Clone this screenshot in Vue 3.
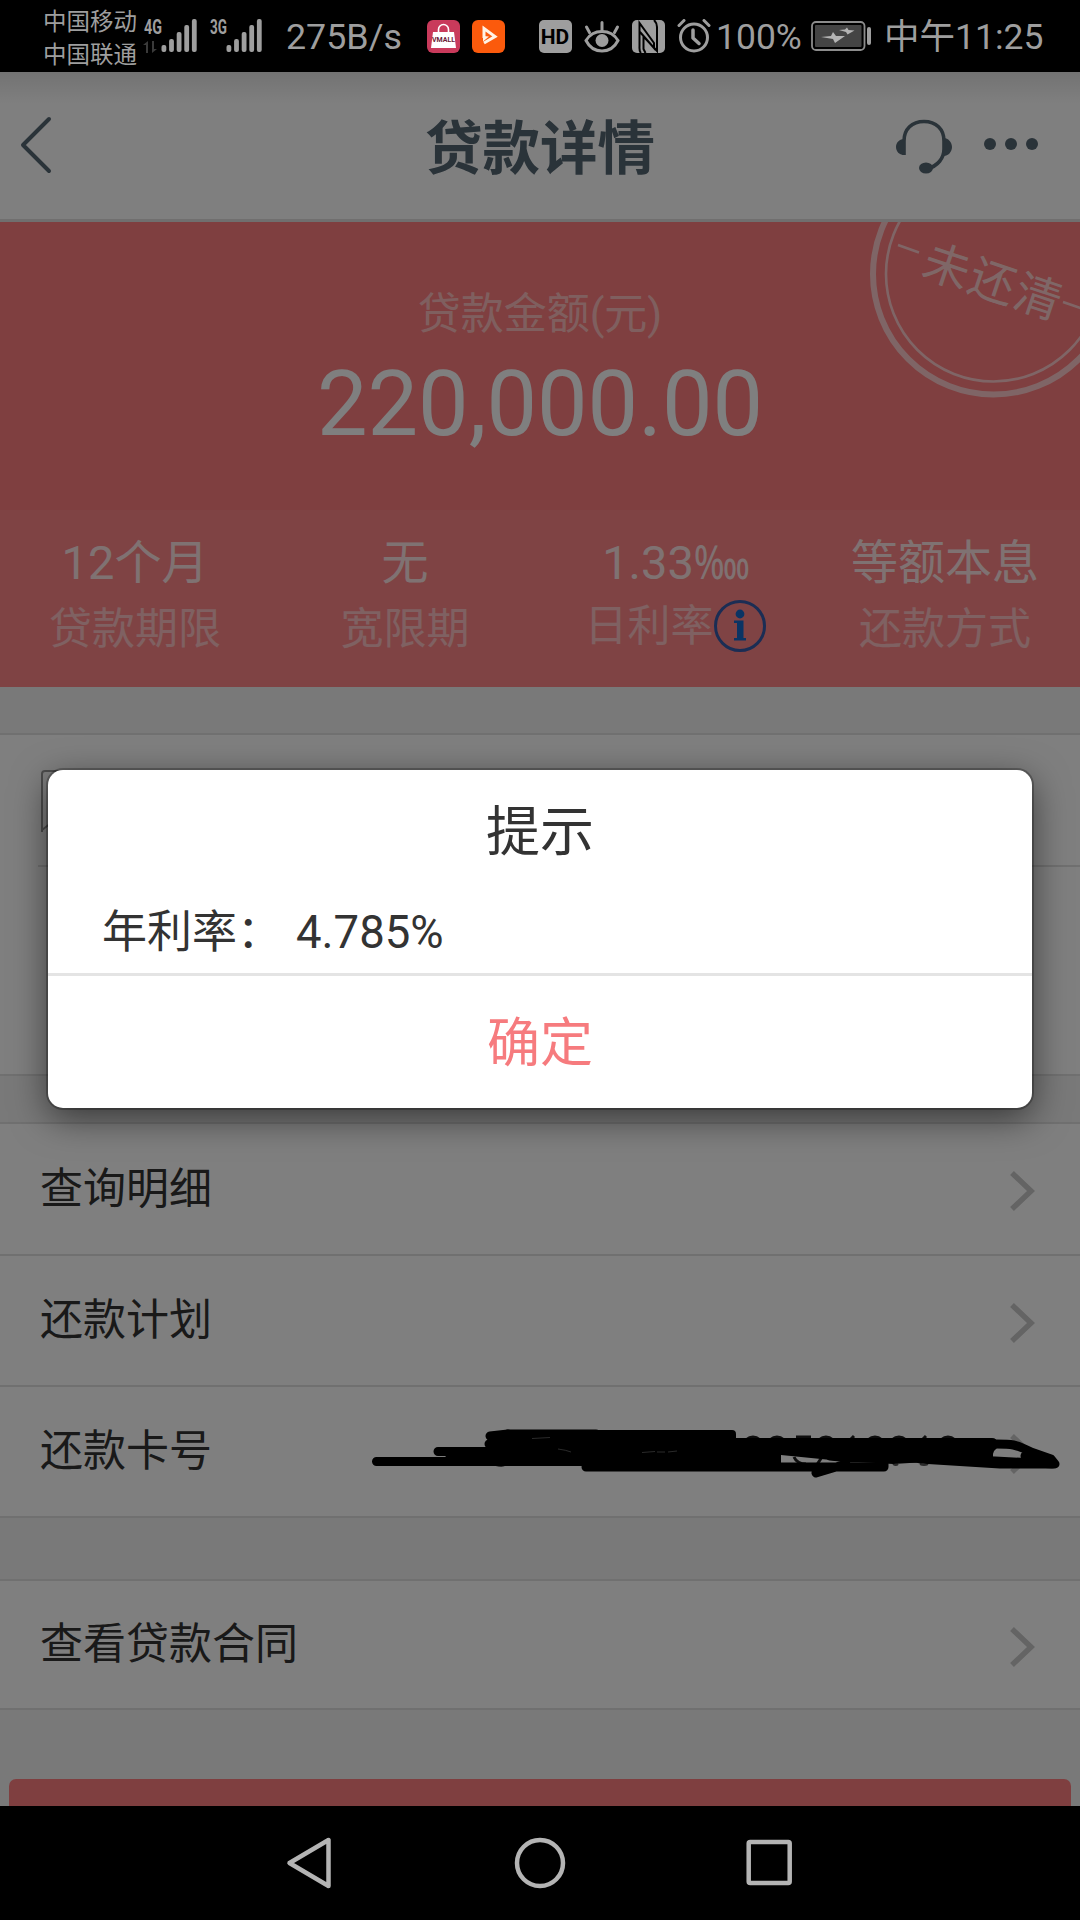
<template>
  <div class="phone">
    <div class="status-bar">
      <div class="carriers">
        <span>中国移动</span>
        <span>中国联通</span>
      </div>
      <svg class="signal" width="120" height="72" viewBox="0 0 120 72">
        <text x="1" y="34" class="net" textLength="18" lengthAdjust="spacingAndGlyphs">4G</text>
        <g fill="#3a3a3a">
          <path d="M5 41v12h-2v-8h-3zM9 53v-12h2v8h3z" />
        </g>
        <g v-for="start in [18.5, 83.5]" :key="start" fill="#9e9e9e">
          <rect
            v-for="(h, i) in barHeights"
            :key="i"
            :x="start + i * 7.6"
            :y="52 - h"
            width="4.8"
            :height="h"
            rx="2"
          />
        </g>
        <text x="67" y="34" class="net" textLength="17" lengthAdjust="spacingAndGlyphs">3G</text>
      </svg>
      <span class="speed">275B/s</span>
      <svg class="app-icon vmall" width="33" height="33" viewBox="0 0 33 33">
        <rect width="33" height="33" rx="6" fill="#c93a5b" />
        <path d="M6 12h21l2 16H4z" fill="#fff" />
        <path d="M11.500 14V9.500a5 5 0 0 1 10 0V14" fill="none" stroke="#fff" stroke-width="1.600" />
        <text x="16.500" y="21.500" text-anchor="middle" class="vmall-text">VMALL</text>
      </svg>
      <svg class="app-icon" width="33" height="33" viewBox="0 0 33 33">
        <rect width="33" height="33" rx="6" fill="#fb5a0c" />
        <path d="M12 18V8.500l11 8-11 6.500" fill="none" stroke="#fff3e6" stroke-width="3" />
        <path d="M11 16l6 0.500-6 5z" fill="#fff3e6" />
      </svg>
      <svg class="sys-icon hd" width="33" height="33" viewBox="0 0 33 33">
        <rect width="33" height="33" rx="5" fill="#9e9e9e" />
        <text x="16" y="24" text-anchor="middle" class="hd-text">HD</text>
      </svg>
      <svg class="sys-icon eye" width="36" height="33" viewBox="0 0 36 33" fill="none" stroke="#9e9e9e" stroke-width="3">
        <path d="M2 20.500C9 8.500 27 8.500 34 20.500C27 34.500 9 34.500 2 20.500z" />
        <circle cx="18" cy="20.500" r="6.500" fill="#9e9e9e" stroke="none" />
        <path d="M18 2.500v8M2.500 7l3 5.500M33.500 7l-3 5.500" stroke-linecap="round" />
      </svg>
      <svg class="sys-icon nfc" width="33" height="33" viewBox="0 0 33 33">
        <rect width="33" height="33" rx="5" fill="#9e9e9e" />
        <path d="M9 33C7 31 7.500 29 7.500 26V3L22 23v5L8 12M11.500 16v13l2 4M22 0q3 3 3 7v24L12 17" fill="none" stroke="#000" stroke-width="2" />
      </svg>
      <svg class="sys-icon alarm" width="34" height="34" viewBox="0 0 34 34" fill="none" stroke="#9e9e9e" stroke-width="3">
        <circle cx="17" cy="18.500" r="13.500" />
        <path d="M16 11v8l6 5.500" stroke-width="3.500" stroke-linecap="round" stroke-linejoin="round" />
        <path d="M2 6.500l5-5M32 6.500l-5-5" stroke-linecap="round" />
      </svg>
      <span class="percent">100%</span>
      <svg class="battery" width="61" height="30" viewBox="0 0 61 30">
        <rect x="1" y="1" width="52.500" height="28" rx="4" fill="none" stroke="#8c8c8c" stroke-width="1.800" />
        <rect x="4" y="4" width="46.500" height="22" rx="1" fill="#444" />
        <path d="M10 16l10-1 2-4 3 4h9l-10 7-2-4zM28 9l6-0.500 2-2 1.500 2.500 6 0.500-7 4-1.500-2.500z" fill="#b4b4b4" />
        <rect x="56" y="6" width="4" height="18" rx="2" fill="#9e9e9e" />
      </svg>
      <span class="clock">中午11:25</span>
    </div>

    <div class="page">
      <header class="header">
        <svg class="back" width="40" height="64" viewBox="0 0 40 64">
          <path d="M33 5L7 31l26 26" fill="none" stroke="#556672" stroke-width="4" stroke-linecap="round" stroke-linejoin="round" />
        </svg>
        <h1>贷款详情</h1>
        <div class="actions">
          <svg width="60" height="58" viewBox="0 0 60 58" fill="none" stroke="#556672">
            <path d="M10 38V24C10 12 18 4.500 30 4.500s20 7.500 20 19.500v8c0 9-6 17-17 20" stroke-width="3.600" />
            <path d="M10 22c-4 0-8 3-8 8s4 8 8 8zM50 21c4 0 8 4 8 9s-4 9-8 9z" fill="#556672" stroke="none" />
            <ellipse cx="32" cy="51" rx="7" ry="5.500" fill="#556672" stroke="none" />
          </svg>
          <svg class="dots" width="56" height="14" viewBox="0 0 56 14" fill="#556672">
            <circle cx="7" cy="7" r="6" />
            <circle cx="28" cy="7" r="6" />
            <circle cx="49" cy="7" r="6" />
          </svg>
        </div>
      </header>

      <section class="hero">
        <p class="hero-label">贷款金额(元)</p>
        <p class="hero-amount">220,000.00</p>
        <svg class="stamp" width="220" height="190" viewBox="860 222 220 190">
          <g fill="none" stroke="#ffffff" stroke-opacity="0.6">
            <circle cx="993.500" cy="274" r="120.500" stroke-width="6" />
            <circle cx="993.500" cy="274" r="107.500" stroke-width="2.600" />
            <path d="M898 245l21 7.500M1063 302l20 7" stroke-width="2.600" />
          </g>
          <text x="993.500" y="298" text-anchor="middle" transform="rotate(18.500 992 281)">未还清</text>
        </svg>
      </section>

      <section class="terms">
        <div v-for="item in terms" :key="item.label" class="term">
          <span class="term-value">{{ item.value }}<span v-if="item.unit" class="unit">{{ item.unit }}</span></span>
          <span class="term-label" :class="{ 'has-info': item.info }">
            {{ item.label }}
            <svg v-if="item.info" width="52" height="52" viewBox="0 0 52 52">
              <circle cx="26" cy="26" r="24.500" fill="none" stroke="#365aa8" stroke-width="3" />
              <circle cx="26" cy="14" r="4.400" fill="#1468c8" />
              <path d="M20 20.500h9.500V38H32v2.500H20V38h3V23h-3z" fill="#1468c8" />
            </svg>
          </span>
        </div>
      </section>

      <section class="card summary">
        <div class="summary-head">
          <svg width="40" height="64" viewBox="0 0 40 64">
            <path d="M2 62V4a3 3 0 0 1 3-3h34M2 60l9-7" fill="none" stroke="#999" stroke-width="2" />
          </svg>
        </div>
      </section>

      <section class="card">
        <div v-for="row in rows" :key="row.label" class="row">
          <span>{{ row.label }}</span>
          <svg class="arrow" width="28" height="42" viewBox="0 0 28 42">
            <path d="M3 3l19 18L3 39" fill="none" stroke="#c8c8c8" stroke-width="5.500" />
          </svg>
          <!-- hand-drawn strokes hiding the card number -->
          <svg v-if="row.hidden" class="scribble" width="710" height="100" viewBox="0 0 710 100">
            <g fill="none" stroke="#1c1c1c" stroke-width="3">
              <path d="M386 40q7-6 14 0M410 40q7-6 14 0M436 37h15M459 40q7-6 14 0M490 40l4-4M508 40q7-6 14 0M532 40q7-6 14 0M562 40l4-4M581 40q7-6 14 0" />
              <path d="M434 57q3 7 12 7M456 66l6-9" />
              <path d="M136 65q6 2 9 0M160 65h7M187 65h6M533 64q3 2 5 0M560 64q4 2 8 0" stroke="#555" stroke-width="2" />
            </g>
            <g fill="none" stroke="#000" stroke-linecap="round" stroke-linejoin="round" stroke-width="9">
              <path d="M16.500 61.500H230M78 51.500H220M90 56H220M130 36l18-2M132 40h60M129 44h90" />
              <path d="M148 34h88M226 62h190M226 67H524M456 73l30-9M524 62v5" />
              <path d="M470 56l20 2h60l85 3 60 3-4-5-20-7c-15-8-20-8-35-8" />
              <path d="M560 59l80 5h52l-2-4-25-4" />
            </g>
            <path d="M172 30H372q4 0 4 4v4H632q5 0 5 5v5q-3 2-4 6v4l-100 6-52-3-60-6v9H222V60H180z" fill="#000" />
            <path d="M172 38.500l18-1M198 49q8 1 13 3M282 52.500l13-1M297 52h8M308 52l9-1" fill="none" stroke="#555" stroke-width="1" />
          </svg>
        </div>
      </section>

      <section class="card contract">
        <div class="row">
          <span>查看贷款合同</span>
          <svg class="arrow" width="28" height="42" viewBox="0 0 28 42">
            <path d="M3 3l19 18L3 39" fill="none" stroke="#c8c8c8" stroke-width="5.500" />
          </svg>
        </div>
      </section>

      <button class="submit"></button>

      <div class="mask">
        <div class="dialog">
          <h2>提示</h2>
          <p>年利率：<span class="value">4.785%</span></p>
          <button class="confirm">确定</button>
        </div>
      </div>
    </div>

    <nav class="nav-bar">
      <svg width="50" height="54" viewBox="0 0 50 54">
        <path d="M42.500 4v46L3.500 27z" fill="none" stroke="#b4b4b4" stroke-width="4.500" stroke-linejoin="round" />
      </svg>
      <svg width="54" height="54" viewBox="0 0 54 54">
        <circle cx="27" cy="27" r="23" fill="none" stroke="#b4b4b4" stroke-width="4.500" />
      </svg>
      <svg width="50" height="54" viewBox="0 0 50 54">
        <rect x="4.700" y="6" width="41" height="41" rx="1.500" fill="none" stroke="#b4b4b4" stroke-width="4.500" />
      </svg>
    </nav>
  </div>
</template>

<script setup>
const barHeights = [7, 13, 20, 27, 33]

const terms = [
  { value: '12个月', label: '贷款期限' },
  { value: '无', label: '宽限期' },
  { value: '1.33', unit: '‱', label: '日利率', info: true },
  { value: '等额本息', label: '还款方式' }
]

const rows = [
  { label: '查询明细' },
  { label: '还款计划' },
  { label: '还款卡号', hidden: true }
]
</script>

<style>
body {
  margin: 0;
  background: #000;
}
</style>

<style scoped>
.phone {
  width: 1080px;
  height: 1920px;
  display: flex;
  flex-direction: column;
  overflow: hidden;
  background: #000;
  font-family: Roboto, 'Noto Sans CJK SC', sans-serif;
}

h1,
h2,
p {
  margin: 0;
}

svg {
  display: block;
  flex: none;
}

/* Status bar */
.status-bar {
  height: 72px;
  flex: none;
  display: flex;
  align-items: center;
  color: #9e9e9e;
  font-size: 36px;
  line-height: 72px;
  white-space: nowrap;
}

.carriers {
  width: 94px;
  margin-left: 43px;
  padding-top: 5px;
  display: flex;
  flex-direction: column;
  font-size: 23.5px;
  line-height: 33px;
}

.signal {
  margin-left: 6px;
}

.net {
  font-size: 21px;
  font-weight: 700;
  fill: #9e9e9e;
}

.speed {
  width: 114px;
  margin-left: 23px;
  padding-top: 2px;
  font-size: 35.8px;
}

.vmall {
  margin-left: 27px;
}

.vmall-text {
  font-size: 7px;
  font-weight: 700;
  fill: #6b2035;
}

.app-icon + .app-icon {
  margin-left: 12px;
}

.hd {
  margin-left: 34px;
}

.hd-text {
  font-size: 21px;
  font-weight: 700;
  fill: #000;
}

.eye,
.nfc,
.alarm {
  margin-left: 12px;
}

.percent {
  width: 85px;
  margin-left: 5px;
  padding-top: 2px;
  font-size: 35.5px;
}

.battery {
  margin-left: 10px;
}

.clock {
  margin-left: 12px;
  padding-top: 2px;
  font-size: 35.5px;
}

/* Page */
.page {
  position: relative;
  height: 1734px;
  flex: none;
  overflow: hidden;
  background: #f2f2f2;
}

.header {
  height: 150px;
  box-sizing: border-box;
  border-bottom: 3px solid #e0dede;
  display: flex;
  align-items: center;
  justify-content: space-between;
  background: linear-gradient(#e6e6e6, #fff 32px);
}

.header h1 {
  width: 240px;
  margin-left: 125px;
  padding-top: 9px;
  font-size: 57.5px;
  font-weight: 700;
  line-height: 84px;
  text-align: center;
  color: #556672;
}

.back {
  margin-left: 16px;
  margin-right: 5px;
}

.actions {
  width: 186px;
  display: flex;
  align-items: center;
  gap: 29px;
}

.dots {
  margin-bottom: 3px;
}

.hero {
  position: relative;
  height: 288px;
  background: #ff7e80;
  text-align: center;
  color: #fff;
}

.hero-label {
  padding-top: 62px;
  font-size: 43px;
  line-height: 60px;
  color: rgba(255, 255, 255, 0.52);
}

.hero-amount {
  font-size: 90px;
  line-height: 121px;
}

.stamp {
  position: absolute;
  right: 0;
  top: 0;
}

.stamp text {
  font-size: 46.5px;
  letter-spacing: 1.5px;
  fill: rgba(255, 255, 255, 0.65);
}

.terms {
  height: 177px;
  box-sizing: border-box;
  padding-top: 21px;
  display: grid;
  grid-template-columns: repeat(4, 1fr);
  background: #ff8789;
}

.term {
  display: flex;
  flex-direction: column;
  align-items: center;
}

.term-value {
  height: 64px;
  font-size: 47px;
  line-height: 64px;
  white-space: nowrap;
  color: rgba(255, 255, 255, 0.8);
}

/* the per-ten-thousand sign is drawn condensed */
.unit {
  display: inline-block;
  width: 54px;
  font-weight: 300;
  transform: scaleX(0.77);
  transform-origin: left;
}

.term-label {
  height: 68px;
  display: flex;
  align-items: center;
  font-size: 43px;
  line-height: 62px;
  color: rgba(255, 255, 255, 0.5);
}

.term-label.has-info {
  height: 61px;
}

/* Cards */
.card {
  border-top: 2px solid #e0e0e0;
  border-bottom: 2px solid #e0e0e0;
  background: #fff;
}

.summary {
  height: 339px;
  margin-top: 46px;
  margin-bottom: 46px;
}

.summary-head {
  height: 132px;
  margin-left: 38px;
  box-sizing: border-box;
  padding: 35px 0 0 2px;
  border-bottom: 2px solid #e0e0e0;
}

.row {
  position: relative;
  height: 130px;
  display: flex;
  align-items: center;
  justify-content: space-between;
  padding: 0 43px 0 40px;
  font-size: 43px;
  color: #333;
}

.row span {
  margin-top: -9px;
}

.row + .row {
  height: 129px;
  border-top: 2px solid #e0e0e0;
}

.arrow {
  margin-top: 4px;
}

.scribble {
  position: absolute;
  left: 360px;
  top: 13px;
}

.contract {
  margin-top: 61px;
}

.contract .row {
  height: 127px;
}

.submit {
  display: block;
  width: 1062px;
  height: 120px;
  margin: 69px auto 0;
  border: 0;
  border-radius: 7px;
  background: #ff7e80;
}

/* Dialog */
.mask {
  position: absolute;
  inset: 0;
  background: rgba(0, 0, 0, 0.5);
}

.dialog {
  position: absolute;
  left: 48px;
  top: 698px;
  width: 984px;
  height: 338px;
  display: flex;
  flex-direction: column;
  border-radius: 15px;
  background: #fff;
  box-shadow: 0 0 0 2px rgba(0, 0, 0, 0.25), 0 10px 36px rgba(0, 0, 0, 0.55);
  color: #333;
}

.dialog h2 {
  height: 122px;
  font-size: 54px;
  font-weight: 400;
  line-height: 126px;
  text-align: center;
}

.dialog p {
  height: 81px;
  padding-left: 54px;
  font-size: 45px;
  line-height: 81px;
  border-bottom: 3px solid #e4e4e4;
}

.dialog .value {
  margin-left: 14px;
  font-size: 45.5px;
}

.confirm {
  flex: 1;
  padding: 0 0 7px;
  border: 0;
  background: none;
  font-family: inherit;
  font-size: 53px;
  color: #f67b7e;
}

/* Navigation */
.nav-bar {
  height: 114px;
  flex: none;
  display: flex;
  align-items: center;
  justify-content: center;
  gap: 177px;
}
</style>
